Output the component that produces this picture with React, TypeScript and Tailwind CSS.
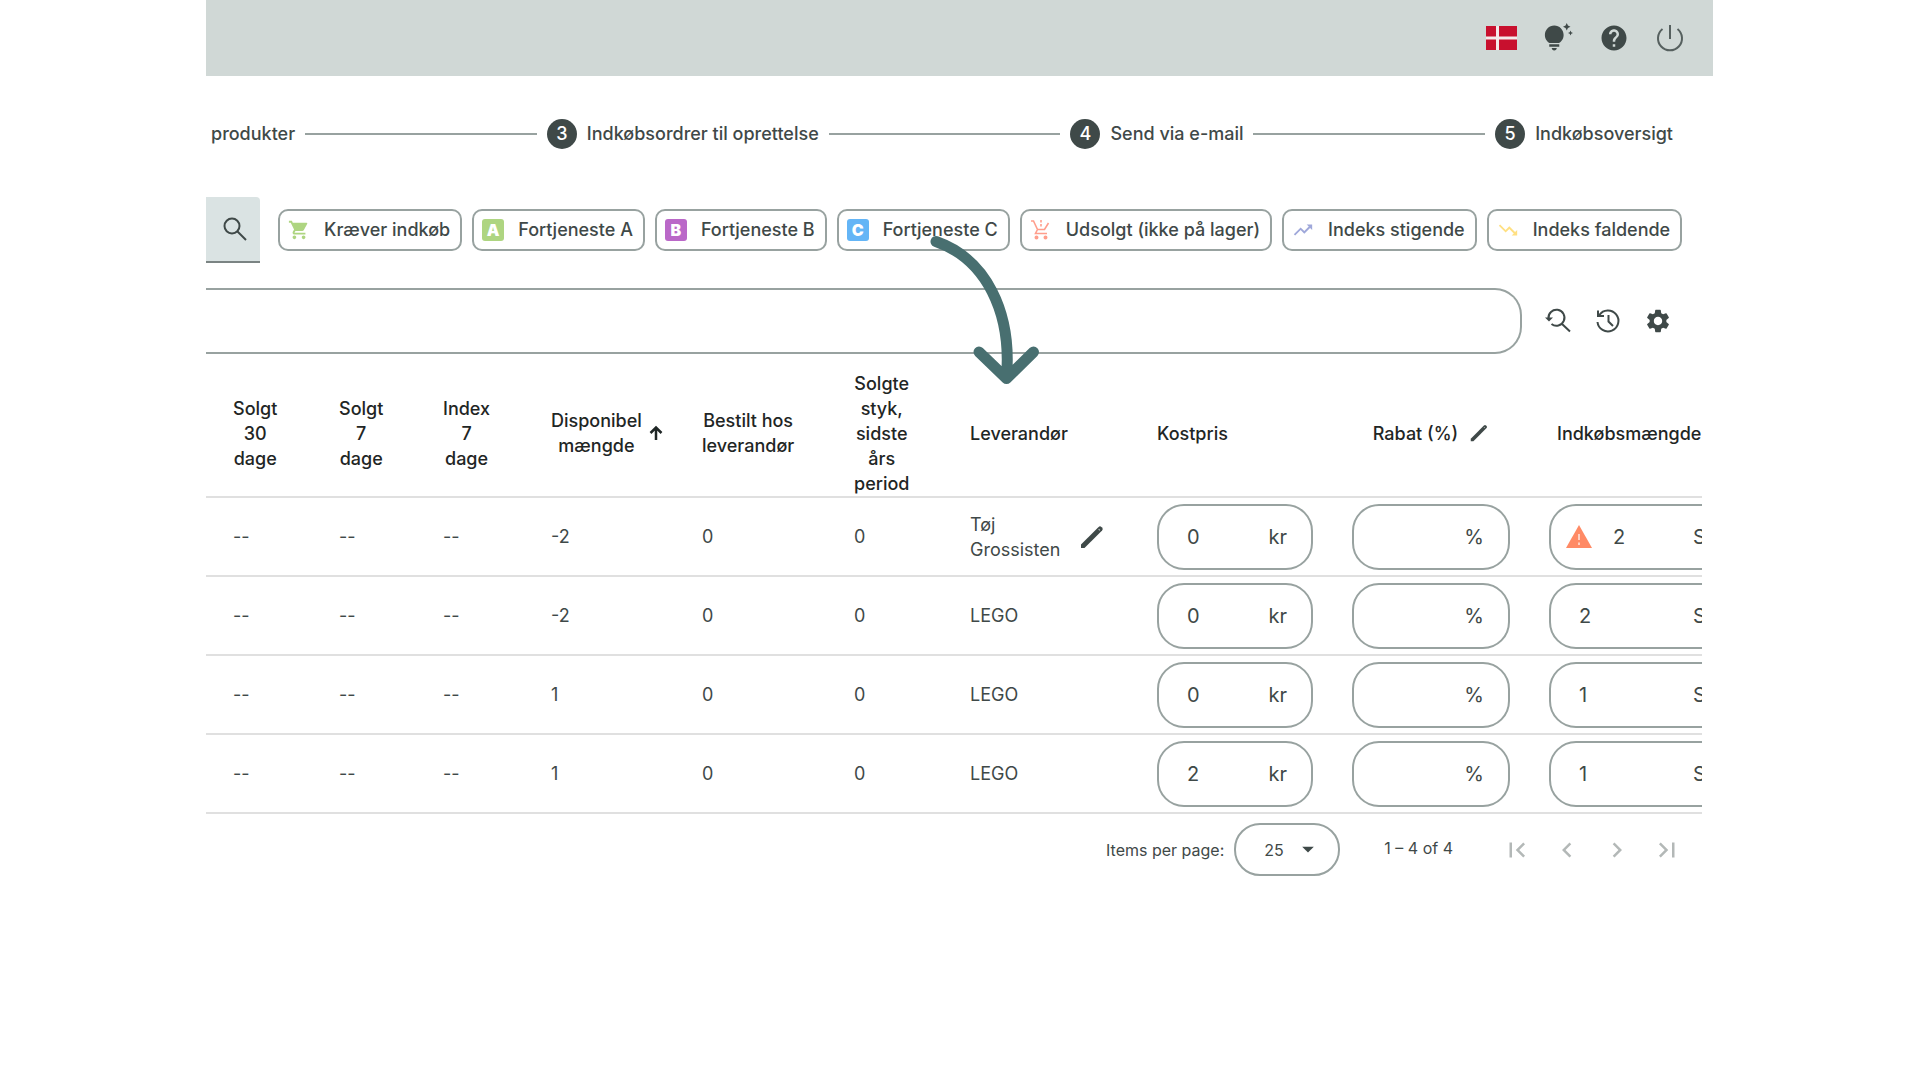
import type { ReactNode } from 'react';
import {
  MdArrowDropDown,
  MdChevronLeft,
  MdChevronRight,
  MdFirstPage,
  MdHelp,
  MdLastPage,
  MdSettings,
  MdShoppingCart,
  MdTipsAndUpdates,
  MdTrendingDown,
  MdTrendingUp,
} from 'react-icons/md';

const steps = [
  { number: 3, label: 'Indkøbsordrer til oprettelse' },
  { number: 4, label: 'Send via e-mail' },
  { number: 5, label: 'Indkøbsoversigt' },
];

const rows = [
  { id: 1, available: '-2', supplier: 'Tøj Grossisten', price: '0', amount: '2', editable: true },
  { id: 2, available: '-2', supplier: 'LEGO', price: '0', amount: '2', editable: false },
  { id: 3, available: '1', supplier: 'LEGO', price: '0', amount: '1', editable: false },
  { id: 4, available: '1', supplier: 'LEGO', price: '2', amount: '1', editable: false },
];

const DanishFlag = () => (
  <svg className="h-6 w-[31px]" viewBox="0 0 31 24">
    <path d="M0 0h31v24H0z" fill="#c8102e" />
    <path d="M11.5 0v24M0 12h31" stroke="#f4e9ea" strokeWidth="3" />
  </svg>
);

const PowerIcon = () => (
  <svg
    className="size-[30px] text-[#56605f]"
    fill="none"
    stroke="currentColor"
    strokeWidth="2"
    viewBox="0 0 30 30"
  >
    <path d="M15 2v14M7.5 6a12 12 0 1 0 15 0" />
  </svg>
);

const SearchIcon = () => (
  <svg className="size-6" fill="none" stroke="currentColor" strokeWidth="2" viewBox="0 0 24 24">
    <circle cx="9" cy="9" r="7.5" />
    <path d="M14.5 14.5 23 23" />
  </svg>
);

const SearchBackIcon = () => (
  <svg className="size-7" fill="none" stroke="currentColor" strokeWidth="2" viewBox="0 0 28 28">
    <path d="M4.500 11.500a8 8 0 1 1 3 5.500M17.500 16.500l8.500 8" />
    <path d="M1 10.500h8l-4 4z" fill="currentColor" stroke="none" />
  </svg>
);

const HistoryIcon = () => (
  <svg className="size-7" fill="none" stroke="currentColor" strokeWidth="2" viewBox="0 0 28 28">
    <path d="M3.500 15a10.500 10.500 0 1 0 1.800-7M4 3.500V9h6M14.500 8v6.500l4.500 4.500" />
  </svg>
);

const SortArrow = () => (
  <svg className="size-4" fill="none" stroke="currentColor" strokeWidth="2.500" viewBox="0 0 16 16">
    <path d="M8 15V2.500M2.500 8 8 2.500 13.500 8" />
  </svg>
);

const WarningIcon = () => (
  <svg className="mr-5 size-7 shrink-0" viewBox="0 0 28 28">
    <path d="M14 2 27 25H1z" fill="#ff8a65" />
    <path d="M14 11v6M14 19.500v2.500" stroke="#ffd0c2" strokeWidth="2" />
  </svg>
);

const Pencil = ({ className }: { className: string }) => (
  <svg className={className} viewBox="0 0 24 24">
    <path
      d="M1 19.500 18.600 1.900a2 2 0 0 1 2.800 0l.7.7a2 2 0 0 1 0 2.800L4.500 23H1z"
      fill="#3f4948"
    />
    <path d="m18.600 4.100 1.300 1.300" stroke="#b5bbba" strokeWidth="1.200" />
  </svg>
);

const SoldOutCart = () => (
  <svg
    className="size-5 text-[#ff9e8c]"
    fill="none"
    stroke="currentColor"
    strokeWidth="1.600"
    viewBox="0 0 20 20"
  >
    <path d="M1 1h2.500l4 8.500h7L18.500 3M7.500 9.500 5.500 13.500H17M11 0v2.500M11 4v2.500" />
    <circle cx="6.500" cy="17.500" fill="currentColor" r="1.200" />
    <circle cx="15.500" cy="17.500" fill="currentColor" r="1.200" />
  </svg>
);

const Letter = ({ children, className }: { children: string; className: string }) => (
  <span
    className={`flex size-[22px] items-center justify-center rounded-[3px] text-base font-black text-white ${className}`}
  >
    {children}
  </span>
);

const Chip = ({ icon, children }: { icon: ReactNode; children: string }) => (
  <button
    className="flex h-[42px] items-center gap-3 rounded-[10px] border-2 border-[#98a2a0] pr-[10px] pl-2 text-lg font-medium whitespace-nowrap"
    type="button"
  >
    <span className="flex w-6 items-center">{icon}</span>
    {children}
  </button>
);

const HeadCell = ({ children }: { children: ReactNode }) => (
  <th className="py-0 pl-[27px] text-left font-medium">
    <span className="inline-block text-center">{children}</span>
  </th>
);

const Field = ({
  label,
  value,
  unit,
  icon,
  className,
}: {
  label: string;
  value: string;
  unit: string;
  icon?: ReactNode;
  className: string;
}) => (
  <label
    className={`flex h-[66px] items-center rounded-[27px] border-2 border-[#98a2a0] text-xl ${className}`}
  >
    {icon}
    <input
      aria-label={label}
      className="w-0 min-w-0 grow bg-transparent outline-none"
      defaultValue={value}
      type="text"
    />
    <span>{unit}</span>
  </label>
);

const TopBar = () => (
  <header className="flex h-[76px] items-center justify-end gap-[26px] bg-[#d0d8d6] pr-7">
    <button aria-label="Sprog" type="button">
      <DanishFlag />
    </button>
    <button aria-label="Tips" type="button">
      <MdTipsAndUpdates className="size-[30px]" />
    </button>
    <button aria-label="Hjælp" type="button">
      <MdHelp className="size-[30px]" />
    </button>
    <button aria-label="Log ud" type="button">
      <PowerIcon />
    </button>
  </header>
);

const Stepper = () => (
  <ol className="mt-[42px] mr-10 ml-[5px] flex h-8 items-center gap-[10px] text-lg font-medium">
    <li>produkter</li>
    {steps.map(step => (
      <li key={step.number} className="flex grow items-center gap-[10px] whitespace-nowrap">
        <span className="h-[2px] grow bg-[#98a2a0]" />
        <span className="flex size-[30px] items-center justify-center rounded-full bg-[#3f4948] text-white">
          {step.number}
        </span>
        {step.label}
      </li>
    ))}
  </ol>
);

const Filters = () => (
  <div className="mt-[47px] flex items-center gap-[10px]">
    <button
      aria-label="Søg"
      className="mr-2 flex h-[66px] w-[54px] items-center justify-center rounded-tr border-b-2 border-[#7b8483] bg-[#dae3e3] pl-1"
      type="button"
    >
      <SearchIcon />
    </button>
    <Chip icon={<MdShoppingCart className="size-[22px] text-[#aed581]" />}>Kræver indkøb</Chip>
    <Chip icon={<Letter className="bg-[#aed581]">A</Letter>}>Fortjeneste A</Chip>
    <Chip icon={<Letter className="bg-[#ba68c8]">B</Letter>}>Fortjeneste B</Chip>
    <Chip icon={<Letter className="bg-[#64b5f6]">C</Letter>}>Fortjeneste C</Chip>
    <Chip icon={<SoldOutCart />}>Udsolgt (ikke på lager)</Chip>
    <Chip icon={<MdTrendingUp className="size-[22px] text-[#9fa8da]" />}>Indeks stigende</Chip>
    <Chip icon={<MdTrendingDown className="size-[22px] text-[#ffe082]" />}>Indeks faldende</Chip>
  </div>
);

const SearchBar = () => (
  <div className="mt-[25px] flex items-center pr-[41px]">
    <input
      aria-label="Søg i produkter"
      className="h-[66px] min-w-0 grow rounded-r-[27px] border-2 border-l-0 border-[#98a2a0] px-6 outline-none"
      type="text"
    />
    <div className="ml-[22px] flex gap-[22px]">
      <button aria-label="Nulstil søgning" type="button">
        <SearchBackIcon />
      </button>
      <button aria-label="Historik" type="button">
        <HistoryIcon />
      </button>
      <button aria-label="Indstillinger" type="button">
        <MdSettings className="size-7" />
      </button>
    </div>
  </div>
);

const ProductTable = () => (
  <div className="mt-4 mr-[11px] overflow-hidden">
    <table className="w-[calc(100%+80px)] table-fixed border-collapse text-lg leading-[25px]">
      <colgroup>
        <col className="w-[106px]" />
        <col className="w-[104px]" />
        <col className="w-[108px]" />
        <col className="w-[151px]" />
        <col className="w-[152px]" />
        <col className="w-[116px]" />
        <col className="w-[187px]" />
        <col className="w-[195px]" />
        <col className="w-[197px]" />
        <col />
      </colgroup>
      <thead className="text-[#1f2625]">
        <tr className="h-[127px] border-b-2 border-[#e0e0e0]">
          <HeadCell>Solgt<br />30<br />dage</HeadCell>
          <HeadCell>Solgt<br />7<br />dage</HeadCell>
          <HeadCell>Index<br />7<br />dage</HeadCell>
          <HeadCell>
            <button className="flex items-center gap-[6px]" type="button">
              <span>Disponibel<br />mængde</span>
              <SortArrow />
            </button>
          </HeadCell>
          <HeadCell>Bestilt hos<br />leverandør</HeadCell>
          <HeadCell>Solgte<br />styk,<br />sidste<br />års<br />period</HeadCell>
          <HeadCell>Leverandør</HeadCell>
          <HeadCell>Kostpris</HeadCell>
          <HeadCell>
            <span className="flex w-[157px] items-center justify-center gap-3">
              Rabat (%)
              <Pencil className="size-[18px]" />
            </span>
          </HeadCell>
          <HeadCell><span className="pl-2">Indkøbsmængde</span></HeadCell>
        </tr>
      </thead>
      <tbody>
        {rows.map(row => (
          <tr key={row.id} className="h-[79px] border-b-2 border-[#e0e0e0]">
            <td className="pl-[27px]">--</td>
            <td className="pl-[27px]">--</td>
            <td className="pl-[27px]">--</td>
            <td className="pl-[27px]">{row.available}</td>
            <td className="pl-[27px]">0</td>
            <td className="pl-[27px]">0</td>
            <td className="pl-[27px]">
              <div className="flex items-center gap-4">
                <span className={row.editable ? 'w-[94px]' : ''}>{row.supplier}</span>
                {row.editable && (
                  <button aria-label="Rediger leverandør" type="button">
                    <Pencil className="size-6" />
                  </button>
                )}
              </div>
            </td>
            <td className="pl-[27px]">
              <Field className="w-[156px] pr-6 pl-7" label="Kostpris" unit="kr" value={row.price} />
            </td>
            <td className="pl-[27px]">
              <Field className="w-[158px] pr-6 pl-7" label="Rabat" unit="%" value="" />
            </td>
            <td className="pl-[27px]">
              <Field
                className={row.editable ? 'w-[206px] pr-6 pl-[14px]' : 'w-[206px] pr-6 pl-7'}
                icon={row.editable && <WarningIcon />}
                label="Indkøbsmængde"
                unit="Stk."
                value={row.amount}
              />
            </td>
          </tr>
        ))}
      </tbody>
    </table>
  </div>
);

const Paginator = () => (
  <div className="mt-[9px] flex items-center justify-end pr-[31px] text-base">
    <label className="flex items-center gap-[10px]">
      Items per page:
      <span className="relative">
        <select
          className="h-[53px] w-[106px] appearance-none rounded-[26px] border-2 border-[#98a2a0] pl-7 outline-none"
          defaultValue="25"
        >
          <option>25</option>
          <option>50</option>
          <option>100</option>
        </select>
        <MdArrowDropDown className="pointer-events-none absolute top-3 right-[18px] size-7" />
      </span>
    </label>
    <span className="mr-[49px] ml-11 pb-1">1 – 4 of 4</span>
    <div className="flex gap-5 text-[#b3b8b7]">
      <button aria-label="Første side" type="button">
        <MdFirstPage className="size-[30px]" />
      </button>
      <button aria-label="Forrige side" type="button">
        <MdChevronLeft className="size-[30px]" />
      </button>
      <button aria-label="Næste side" type="button">
        <MdChevronRight className="size-[30px]" />
      </button>
      <button aria-label="Sidste side" type="button">
        <MdLastPage className="size-[30px]" />
      </button>
    </div>
  </div>
);

const App = () => (
  <div className="min-h-screen bg-white pr-[207px] pl-[206px] font-['Inter',sans-serif] text-[#3f4948]">
    <main className="relative">
      <TopBar />
      <Stepper />
      <Filters />
      <SearchBar />
      <ProductTable />
      <Paginator />

      {/* Arrow pointing at the supplier column */}
      <svg
        className="pointer-events-none absolute top-[232px] left-[720px] h-[160px] w-[120px]"
        fill="none"
        stroke="#486f70"
        strokeLinecap="round"
        strokeLinejoin="round"
        strokeWidth="11"
        viewBox="0 0 120 160"
      >
        <path d="M10 9.500C60 27 86 80 80.500 145M53 120l27.500 26.500L107.500 120" />
      </svg>
    </main>
  </div>
);

export default App;
